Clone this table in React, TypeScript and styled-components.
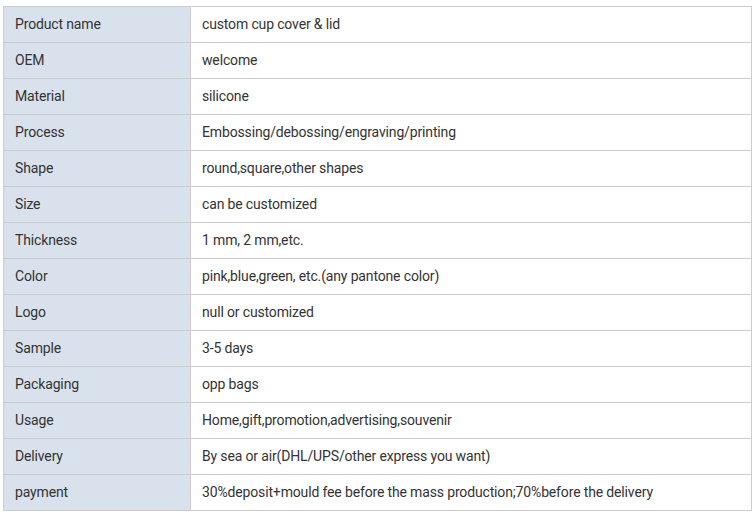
import React from "react";
import styled, { createGlobalStyle } from "styled-components";

const Global = createGlobalStyle`
  html, body { margin: 0; padding: 0; background: #ffffff; }
  body { font-family: Roboto, "Liberation Sans", Arial, sans-serif; }
`;

const Wrap = styled.div`
  padding: 6px 0 0 3px;
`;

const Table = styled.table`
  border-collapse: collapse;
  width: 749px;
  table-layout: fixed;
  font-size: 14px;
  letter-spacing: -0.15px;
  color: #333333;
`;

const Row = styled.tr`
  height: 36px;
`;

const Cell = styled.td<{ $label?: boolean }>`
  border: 1px solid #cccccc;
  padding: 0 0 2px 11px;
  height: 35px;
  box-sizing: border-box;
  vertical-align: middle;
  background: ${(p) => (p.$label ? "#d9e2ec" : "#ffffff")};
  width: ${(p) => (p.$label ? "187px" : "auto")};
  line-height: 18px;
  white-space: nowrap;
`;

const rows: [string, string][] = [
  ["Product name", "custom cup cover & lid"],
  ["OEM", "welcome"],
  ["Material", "silicone"],
  ["Process", "Embossing/debossing/engraving/printing"],
  ["Shape", "round,square,other shapes"],
  ["Size", "can be customized"],
  ["Thickness", "1 mm, 2 mm,etc."],
  ["Color", "pink,blue,green, etc.(any pantone color)"],
  ["Logo", "null or customized"],
  ["Sample", "3-5 days"],
  ["Packaging", "opp bags"],
  ["Usage", "Home,gift,promotion,advertising,souvenir"],
  ["Delivery", "By sea or air(DHL/UPS/other express you want)"],
  ["payment", "30%deposit+mould fee before the mass production;70%before the delivery"],
];

export default function App() {
  return (
    <>
      <Global />
      <Wrap>
        <Table>
          <tbody>
            {rows.map(([k, v]) => (
              <Row key={k}>
                <Cell $label>{k}</Cell>
                <Cell>{v}</Cell>
              </Row>
            ))}
          </tbody>
        </Table>
      </Wrap>
    </>
  );
}
